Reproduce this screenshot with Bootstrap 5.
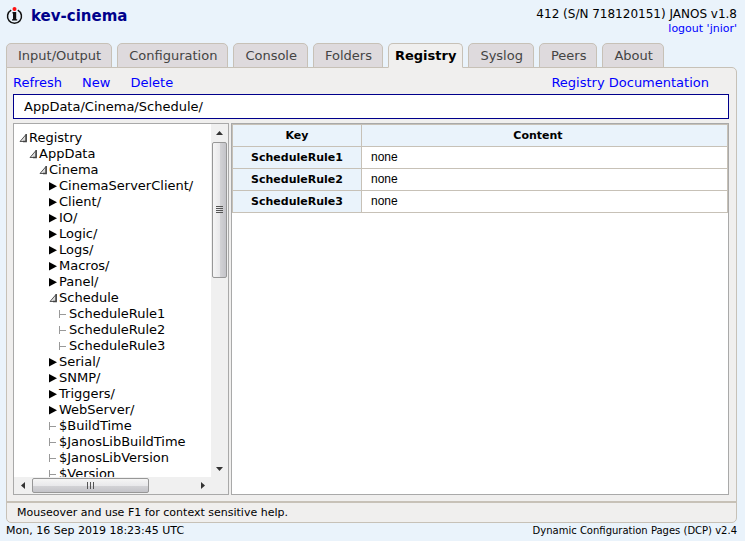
<!DOCTYPE html>
<html lang="en">
<head>
<meta charset="utf-8">
<meta name="viewport" content="width=device-width, initial-scale=1">
<title>kev-cinema - Registry</title>
<link rel="stylesheet" href="https://cdn.jsdelivr.net/npm/bootstrap@5.3.0/dist/css/bootstrap.min.css">
<style>
:root { --line: #c7c1b7; --panel: #f0efee; --sky: #eaf3fb; --edge: #a9a9a9; }
body { font-family: Verdana, "DejaVu Sans", sans-serif; font-size: 13px; line-height: 16px; color: #000; background: var(--sky); padding: 0 8px 0 6px; }
a { color: #00f; text-decoration: none; }
.top-bar { height: 43px; padding-top: 7px; }
.host { font-size: 15px; line-height: 19px; font-weight: 700; color: #00008b; margin: 0; }
.unit { font-size: 12px; line-height: 14px; }
.unit a { font-size: 11px; }
.tabs { gap: 5px; margin-bottom: -1px; position: relative; }
.tabs .nav-link { height: 25px; padding: 4px 10px 0 11px; line-height: 16px; color: #444; background: #dedadd; border: 1px solid var(--line); border-radius: 5px 5px 0 0; }
.tabs .nav-link.active { color: #000; background: var(--panel); border-bottom-color: var(--panel); font-weight: 700; padding: 4px 6px 0; }
.frame { background: var(--panel); border: 1px solid var(--line); border-radius: 0 5px 5px 5px; min-height: 0; }
.work { padding: 7px 7px 6px 6px; gap: 4px; min-height: 0; }
.tools { height: 15px; line-height: 16px; gap: 20px; padding-right: 20px; }
.path-box { height: 25px; border: 1px solid #00008b; border-radius: 0; padding: 0 10px; font-size: 13px; line-height: 23px; color: #000; background: #fff; width: 100%; }
.panes { gap: 2px; min-height: 0; }
.tree-pane { width: 216px; flex: none; display: grid; grid-template: minmax(0, 1fr) 17px / minmax(0, 1fr) 17px; background: #fff; border: 1px solid var(--edge); }
.tree { overflow: hidden; padding: 6px 0 0 5px; }
.tree ul { list-style: none; margin: 0; padding: 0 0 0 10px; }
.tree > ul { padding: 0; }
.tree button { display: flex; align-items: center; height: 16px; border: 0; padding: 0; background: none; color: #000; line-height: 16px; white-space: nowrap; }
.tree svg { width: 10px; height: 16px; flex: none; }
.vbar, .hbar { background: #f0f0f0; }
.arrow { border: 0; padding: 0; background: none; width: 17px; height: 17px; flex: none; display: flex; align-items: center; justify-content: center; }
.grip { border: 1px solid #979797; border-radius: 2px; display: flex; align-items: center; justify-content: center; }
.vbar .grip { height: 136px; margin: 1px 1px 0; background: linear-gradient(90deg, #f5f5f5, #e9e9eb 50%, #d2d2d5 55%, #c4c4c9); }
.hbar .grip { width: 117px; margin: 1px 0 1px 1px; background: linear-gradient(#f5f5f5, #e9e9eb 50%, #d2d2d5 55%, #c4c4c9); }
.content-pane { background: #fff; border: 1px solid var(--edge); min-width: 0; }
.keys { width: 100%; border-collapse: collapse; font-size: 11px; line-height: 13px; }
.keys th, .keys td { height: 22px; border: 1px solid var(--line); padding: 0 9px; }
.keys th { background: var(--sky); text-align: center; }
.keys tr > :first-child { width: 129px; }
.keys thead th:last-child { padding-right: 22px; }
.keys td { font-family: Arial, "Liberation Sans", sans-serif; font-size: 12px; }
.hint { border-top: 2px solid var(--line); height: 21px; padding: 2px 10px 0; font-size: 11px; line-height: 16px; }
.foot { font-size: 10px; line-height: 13px; height: 18px; padding-top: 1px; }
.foot time { font-size: 11px; }
</style>
<script src="https://cdn.jsdelivr.net/npm/bootstrap@5.3.0/dist/js/bootstrap.bundle.min.js" defer></script>
</head>
<body class="vh-100 d-flex flex-column overflow-hidden">
<svg class="d-none" aria-hidden="true">
  <symbol id="open" viewBox="0 0 10 16"><path d="M7 4.5v7H1z" fill="#ddd" stroke="#444" stroke-width=".9"/><path d="M7.2 4v7.5H4" fill="none" stroke="#444" stroke-width="1.4"/></symbol>
  <symbol id="shut" viewBox="0 0 10 16"><path d="M0 4l8 4.2-8 4.3z" fill="#000"/></symbol>
  <symbol id="leaf" viewBox="0 0 10 16"><path d="M.5 4v8M1 8.5h6" fill="none" stroke="#999"/></symbol>
</svg>

<header class="top-bar d-flex justify-content-between flex-shrink-0">
  <div class="d-flex align-items-start">
    <svg width="17" height="18" viewBox="0 0 17 18" class="me-2 flex-shrink-0" aria-hidden="true">
      <path d="M5.2 3.2A7 7 0 1 0 11.8 3.2" fill="none" stroke="#111" stroke-width="1.5"/>
      <path d="M6.5 5h3.7v7.2h1v1.4H6v-1.4h1V6.4h-.5z" fill="#111"/>
      <circle cx="8.5" cy="2" r="2" fill="#f11"/>
    </svg>
    <h1 class="host">kev-cinema</h1>
  </div>
  <div class="unit text-end">412 (S/N 718120151) JANOS v1.8<br><a href="#">logout 'jnior'</a></div>
</header>

<nav class="tabs nav flex-nowrap flex-shrink-0">
  <a class="nav-link" href="#">Input/Output</a>
  <a class="nav-link" href="#">Configuration</a>
  <a class="nav-link" href="#">Console</a>
  <a class="nav-link" href="#">Folders</a>
  <a class="nav-link active" aria-current="page" href="#">Registry</a>
  <a class="nav-link" href="#">Syslog</a>
  <a class="nav-link" href="#">Peers</a>
  <a class="nav-link" href="#">About</a>
</nav>

<main class="frame d-flex flex-column flex-fill">
  <div class="work d-flex flex-column flex-fill">
    <div class="tools d-flex flex-shrink-0">
      <a href="#">Refresh</a><a href="#">New</a><a href="#">Delete</a>
      <a class="ms-auto" href="#">Registry Documentation</a>
    </div>
    <input class="path-box flex-shrink-0" type="text" aria-label="Registry path" value="AppData/Cinema/Schedule/">
    <div class="panes d-flex flex-fill">
      <section class="tree-pane">
        <div class="tree">
          <ul>
            <li><button><svg><use href="#open"/></svg>Registry</button>
            <ul>
              <li><button><svg><use href="#open"/></svg>AppData</button>
              <ul>
                <li><button><svg><use href="#open"/></svg>Cinema</button>
                <ul>
                  <li><button><svg><use href="#shut"/></svg>CinemaServerClient/</button></li>
                  <li><button><svg><use href="#shut"/></svg>Client/</button></li>
                  <li><button><svg><use href="#shut"/></svg>IO/</button></li>
                  <li><button><svg><use href="#shut"/></svg>Logic/</button></li>
                  <li><button><svg><use href="#shut"/></svg>Logs/</button></li>
                  <li><button><svg><use href="#shut"/></svg>Macros/</button></li>
                  <li><button><svg><use href="#shut"/></svg>Panel/</button></li>
                  <li><button><svg><use href="#open"/></svg>Schedule</button>
                  <ul>
                    <li><button><svg><use href="#leaf"/></svg>ScheduleRule1</button></li>
                    <li><button><svg><use href="#leaf"/></svg>ScheduleRule2</button></li>
                    <li><button><svg><use href="#leaf"/></svg>ScheduleRule3</button></li>
                  </ul></li>
                  <li><button><svg><use href="#shut"/></svg>Serial/</button></li>
                  <li><button><svg><use href="#shut"/></svg>SNMP/</button></li>
                  <li><button><svg><use href="#shut"/></svg>Triggers/</button></li>
                  <li><button><svg><use href="#shut"/></svg>WebServer/</button></li>
                  <li><button><svg><use href="#leaf"/></svg>$BuildTime</button></li>
                  <li><button><svg><use href="#leaf"/></svg>$JanosLibBuildTime</button></li>
                  <li><button><svg><use href="#leaf"/></svg>$JanosLibVersion</button></li>
                  <li><button><svg><use href="#leaf"/></svg>$Version</button></li>
                </ul></li>
              </ul></li>
            </ul></li>
          </ul>
        </div>
        <div class="vbar d-flex flex-column">
          <button class="arrow" aria-label="Scroll up"><svg width="7" height="4"><path d="M0 4l3.5-4L7 4z" fill="#333"/></svg></button>
          <div class="grip"><svg width="7" height="8"><path d="M0 .5h7M0 2.5h7M0 4.5h7M0 6.5h7" stroke="#555"/></svg></div>
          <button class="arrow mt-auto" aria-label="Scroll down"><svg width="7" height="4"><path d="M0 0l3.5 4L7 0z" fill="#333"/></svg></button>
        </div>
        <div class="hbar d-flex">
          <button class="arrow" aria-label="Scroll left"><svg width="4" height="7"><path d="M4 0L0 3.5 4 7z" fill="#333"/></svg></button>
          <div class="grip"><svg width="8" height="7"><path d="M.5 0v7M3.5 0v7M6.5 0v7" stroke="#555"/></svg></div>
          <button class="arrow ms-auto" aria-label="Scroll right"><svg width="4" height="7"><path d="M0 0l4 3.5L0 7z" fill="#333"/></svg></button>
        </div>
        <div class="vbar"></div>
      </section>
      <section class="content-pane flex-fill">
        <table class="keys">
          <thead><tr><th scope="col">Key</th><th scope="col">Content</th></tr></thead>
          <tbody>
            <tr><th scope="row">ScheduleRule1</th><td>none</td></tr>
            <tr><th scope="row">ScheduleRule2</th><td>none</td></tr>
            <tr><th scope="row">ScheduleRule3</th><td>none</td></tr>
          </tbody>
        </table>
      </section>
    </div>
  </div>
  <div class="hint flex-shrink-0">Mouseover and use F1 for context sensitive help.</div>
</main>

<footer class="foot d-flex justify-content-between flex-shrink-0">
  <time datetime="2019-09-16T18:23:45Z">Mon, 16 Sep 2019 18:23:45 UTC</time>
  <span>Dynamic Configuration Pages (DCP) v2.4</span>
</footer>
</body>
</html>
